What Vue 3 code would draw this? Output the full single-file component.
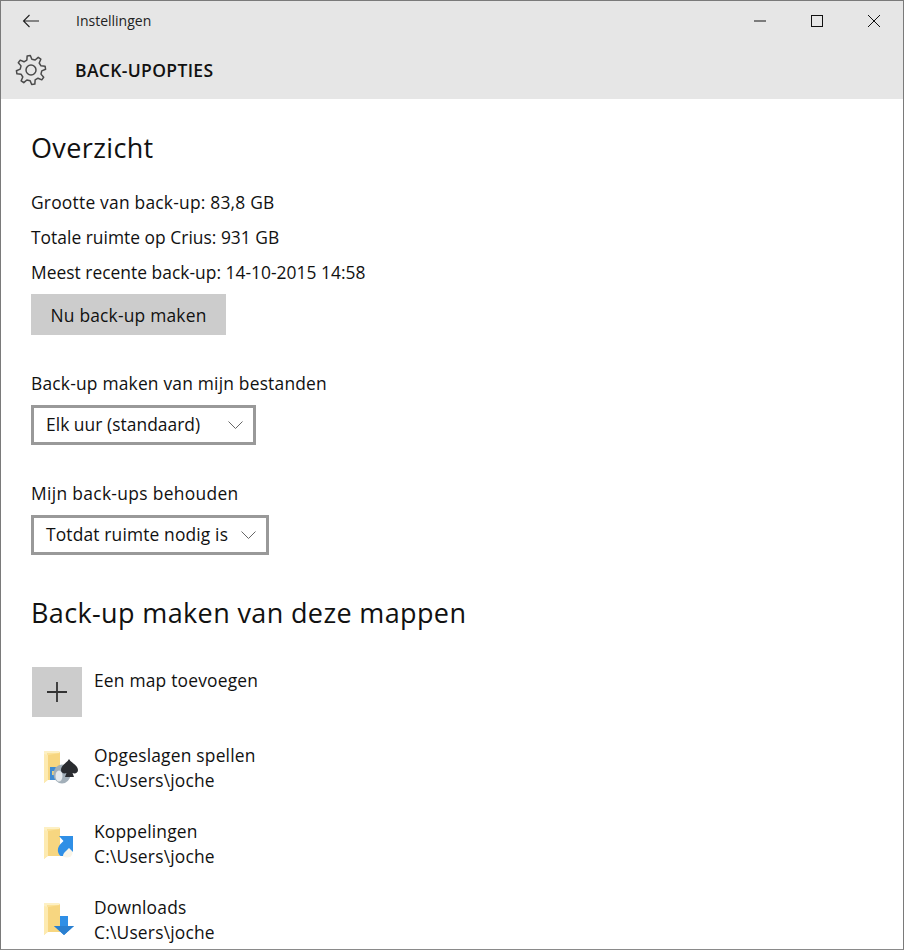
<template>
  <div class="window">
    <header class="head">
      <div class="titlebar">
        <svg class="back" width="18" height="14" viewBox="0 0 18 14">
          <path d="M7.500 1 1.500 7l6 6M1.500 7H17" fill="none" stroke="#222" stroke-width="1.100" />
        </svg>
        <span class="apptitle">Instellingen</span>
        <div class="winbtns">
          <svg width="14" height="14" viewBox="0 0 14 14"><path d="M1 7h12" stroke="#111" stroke-width="1" fill="none" /></svg>
          <svg width="14" height="14" viewBox="0 0 14 14"><rect x="1.500" y="1.500" width="11" height="11" stroke="#111" fill="none" /></svg>
          <svg width="14" height="14" viewBox="0 0 14 14"><path d="M1 1l12 12M13 1 1 13" stroke="#111" stroke-width="1" fill="none" /></svg>
        </div>
      </div>
      <div class="pagebar">
        <svg class="gear" width="32" height="32" viewBox="0 0 32 32">
          <path :d="gearPath" fill="none" stroke="#4a4a4a" stroke-width="1.500" stroke-linejoin="round" />
          <circle cx="16" cy="16" r="5" fill="none" stroke="#4a4a4a" stroke-width="1.500" />
        </svg>
        <span class="pagetitle">BACK-UPOPTIES</span>
      </div>
    </header>

    <main class="content">
      <h2 class="h-first">Overzicht</h2>
      <p v-for="line in stats" :key="line" class="stat">{{ line }}</p>
      <button class="btn">Nu back-up maken</button>

      <label class="lbl lbl-first">Back-up maken van mijn bestanden</label>
      <div class="select s1">
        <span>Elk uur (standaard)</span>
        <svg width="15" height="8" viewBox="0 0 15 8"><path d="M.5.5 7.500 7.500 14.500.5" fill="none" stroke="#666" /></svg>
      </div>

      <label class="lbl lbl-second">Mijn back-ups behouden</label>
      <div class="select s2">
        <span>Totdat ruimte nodig is</span>
        <svg width="15" height="8" viewBox="0 0 15 8"><path d="M.5.5 7.500 7.500 14.500.5" fill="none" stroke="#666" /></svg>
      </div>

      <h2 class="h-second">Back-up maken van deze mappen</h2>

      <div class="addrow">
        <div class="addbox">
          <svg width="22" height="22" viewBox="0 0 22 22"><path d="M11 1v20M1 11h20" stroke="#333" stroke-width="1.800" fill="none" /></svg>
        </div>
        <span>Een map toevoegen</span>
      </div>

      <div v-for="f in folders" :key="f.name" class="folder">
        <div class="ficon">
          <svg width="44" height="44" viewBox="0 0 44 44">
            <!-- map -->
            <path d="M6 5h15l1 1.500V34H9l-3 3z" fill="#fbe29a" />
            <path d="M6 5h15v2H9v27l-3 3z" fill="#fdf0c4" />
            <path d="M10 9l12-2v27H10z" fill="#f7d680" />
            <path d="M6 8l4 1v25l-4 3z" fill="#fdeab0" />
            <g v-if="f.kind === 'games'">
              <path d="M12 21h8v13h-8z" fill="#3f8bd2" />
              <path d="M14 25h3v4h-3z" fill="#e2d08a" />
              <ellipse cx="24" cy="28" rx="8.500" ry="9.500" fill="#a2afb9" />
              <ellipse cx="21" cy="30" rx="3.500" ry="5.500" fill="#e4e9ed" />
              <path d="M31 13c2 4 9 6 9 11 0 3-3 4-5.500 3l1.500 4h-9l1.500-4c-2.500 1-5.500 0-5.500-3 0-5 6-7 8-11z" fill="#2a2c30" />
            </g>
            <g v-else-if="f.kind === 'link'">
              <ellipse cx="29" cy="31" rx="5.500" ry="4.500" fill="#f8f4e8" />
              <path d="M35 14v16l-4-4-3 3c-2 2-3 3-3 5h-2.500c-3.500-3-3.500-8.500 0-12l3-3-4.500-5z" fill="#2f8fe6" />
            </g>
            <g v-else>
              <path d="M22 18h8v10h6L26 37 16 28h6z" fill="#2f8fe6" />
              <path d="M16 28h20l-10 9z" fill="#2a7fd0" />
            </g>
          </svg>
        </div>
        <div class="ftext">
          <span>{{ f.name }}</span>
          <span>C:\Users\joche</span>
        </div>
      </div>
    </main>
  </div>
</template>

<script setup>
const stats = [
  "Grootte van back-up: 83,8 GB",
  "Totale ruimte op Crius: 931 GB",
  "Meest recente back-up: 14-10-2015 14:58",
];

const folders = [
  { name: "Opgeslagen spellen", kind: "games" },
  { name: "Koppelingen", kind: "link" },
  { name: "Downloads", kind: "down" },
];

// tandwiel met 8 tanden
const makeGear = () => {
  const pts = [];
  const teeth = 8;
  const step = (Math.PI * 2) / teeth;
  for (let i = 0; i < teeth; i++) {
    const a = i * step - Math.PI / 8;
    [
      [10.8, 0],
      [14.6, 0.16],
      [14.6, 0.44],
      [10.8, 0.6],
    ].forEach(([r, f]) => {
      const t = a + step * f;
      pts.push(`${(16 + r * Math.cos(t)).toFixed(2)} ${(16 + r * Math.sin(t)).toFixed(2)}`);
    });
  }
  return "M" + pts.join("L") + "Z";
};
const gearPath = makeGear();
</script>

<style>
html,
body {
  margin: 0;
  background: #fff;
}
</style>

<style scoped>
.window {
  width: 904px;
  height: 950px;
  box-sizing: border-box;
  overflow: hidden;
  border: 1px solid #7a7a7a;
  border-bottom-color: #8a8a8a;
  background: #fff;
  color: #111;
  font-family: "Open Sans", "Noto Sans", "Liberation Sans", sans-serif;
  font-size: 17.4px;
  letter-spacing: 0.2px;
}
.head {
  background: #e6e6e6;
  height: 98px;
}
.titlebar {
  height: 39px;
  display: flex;
  align-items: center;
  padding-left: 21px;
}
.apptitle {
  margin-left: 36px;
  font-size: 14px;
  letter-spacing: 0;
  color: #222;
}
.winbtns {
  margin-left: auto;
  display: flex;
  gap: 43px;
  padding-right: 22px;
}
.pagebar {
  height: 59px;
  display: flex;
  align-items: center;
  padding-left: 14px;
}
.pagetitle {
  margin-left: 28px;
  font-size: 17.5px;
  font-weight: 600;
  letter-spacing: 0.35px;
}
.content {
  padding-left: 30px;
}
h2 {
  margin: 0;
  font-weight: 400;
  font-size: 27px;
  letter-spacing: 0.37px;
  line-height: 36px;
}
.h-first {
  padding-top: 31px;
  margin-bottom: 19px;
}
.stat {
  margin: 0;
  line-height: 35px;
  height: 35px;
  letter-spacing: 0.02px;
}
.stat:first-of-type {
  letter-spacing: 0.22px;
}
.btn {
  display: block;
  width: 195px;
  height: 41px;
  margin-top: 4px;
  border: 0;
  padding: 0;
  background: #cccccc;
  color: #111;
  font: inherit;
  letter-spacing: inherit;
}
.lbl {
  display: block;
  line-height: 24px;
}
.lbl-first,
.lbl-second {
  margin-top: 36px;
}
.lbl-second {
  letter-spacing: 0.33px;
}
.select {
  box-sizing: border-box;
  height: 40px;
  margin-top: 10px;
  border: 3px solid #999;
  display: flex;
  align-items: center;
  justify-content: space-between;
  padding: 0 10px 0 12px;
}
.select span {
  margin-top: -3px;
}
.s1 {
  width: 225px;
  letter-spacing: 0.04px;
}
.s2 {
  width: 238px;
  letter-spacing: 0.15px;
}
.h-second {
  margin-top: 40px;
}
.addrow,
.folder {
  display: flex;
  gap: 12px;
  margin-left: 1px;
}
.addrow {
  margin-top: 36px;
  line-height: 27px;
}
.addbox {
  width: 50px;
  height: 50px;
  background: #cccccc;
  display: flex;
  align-items: center;
  justify-content: center;
}
.folder {
  margin-top: 26px;
  height: 50px;
  line-height: 25px;
}
.ficon {
  width: 50px;
  height: 50px;
  padding: 3px 0 0 6px;
  box-sizing: border-box;
}
.ficon svg {
  display: block;
  filter: blur(0.4px);
}
.ftext {
  display: flex;
  flex-direction: column;
}
</style>
